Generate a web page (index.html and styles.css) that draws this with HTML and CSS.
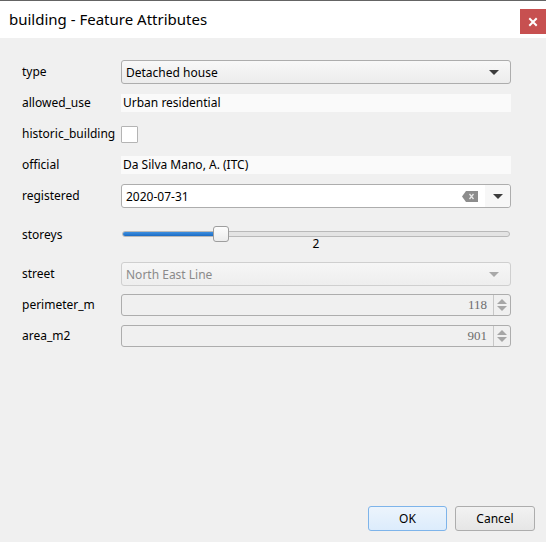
FILE: index.html
```html
<!DOCTYPE html>
<html>
<head>
<meta charset="utf-8">
<link rel="stylesheet" href="styles.css">
</head>
<body>
<div class="window">
  <div class="topline"></div>
  <div class="titlebar">
    <span class="title">building - Feature Attributes</span>
    <div class="close">
      <svg width="10" height="10" viewBox="0 0 10 10"><path d="M2 2 L8 8 M8 2 L2 8" stroke="#fff" stroke-width="2" stroke-linecap="square"/></svg>
    </div>
  </div>
  <div class="content">
    <div class="form">
      <div class="label">type</div>
      <div class="combo"><span>Detached house</span><span class="arrow"></span></div>

      <div class="label">allowed_use</div>
      <div class="cell"><div class="line">Urban residential</div></div>

      <div class="label">historic_building</div>
      <div class="cell"><div class="check"></div></div>

      <div class="label">official</div>
      <div class="cell"><div class="line">Da Silva Mano, A. (ITC)</div></div>

      <div class="label">registered</div>
      <div class="date">
        <span class="date-text">2020-07-31</span>
        <svg class="clear" width="16" height="11" viewBox="0 0 16 11"><path d="M4 0 H16 V11 H4 L0 5.5 Z" fill="#8c8c8c"/><path d="M7.5 3 L11.5 8 M11.5 3 L7.5 8" stroke="#e8e8e8" stroke-width="1.3"/></svg>
        <span class="date-btn"><span class="arrow"></span></span>
      </div>

      <div class="label">storeys</div>
      <div class="slider">
        <div class="track"><div class="fill" style="width:24%"></div></div>
        <div class="handle" style="left:24%"></div>
        <div class="value">2</div>
      </div>

      <div class="label">street</div>
      <div class="combo disabled"><span>North East Line</span><span class="arrow light"></span></div>

      <div class="label">perimeter_m</div>
      <div class="spin"><span class="num">118</span><span class="spin-btns"><span class="up"></span><span class="down"></span></span></div>

      <div class="label">area_m2</div>
      <div class="spin"><span class="num">901</span><span class="spin-btns"><span class="up"></span><span class="down"></span></span></div>
    </div>
  </div>
  <div class="footer">
    <button class="btn btn-default">OK</button>
    <button class="btn">Cancel</button>
  </div>
</div>
</body>
</html>
```
FILE: styles.css
```css
* { box-sizing: border-box; }
html, body { margin: 0; padding: 0; }
body {
  width: 546px;
  height: 542px;
  overflow: hidden;
  font-family: "Noto Sans", "Liberation Sans", sans-serif;
  font-size: 12px;
  color: #000;
  background: #f0f0f0;
}
.window {
  height: 542px;
  display: flex;
  flex-direction: column;
}
.topline {
  height: 1px;
  background: #646464;
}
.titlebar {
  height: 37px;
  background: #fff;
  display: flex;
  align-items: flex-start;
  justify-content: space-between;
}
.title {
  font-size: 15px;
  padding-left: 9px;
  padding-top: 8px;
  line-height: 20px;
}
.close {
  width: 26px;
  height: 25px;
  margin-top: 8px;
  background: #c75050;
  display: flex;
  align-items: center;
  justify-content: center;
}
.content {
  flex: 1;
  padding: 22px 35px 0 22px;
}
.form {
  display: grid;
  grid-template-columns: 99px 390px;
  grid-template-rows: 24px 24px 24px 24px 24px 40px 24px 24px 24px;
  row-gap: 7px;
  align-items: center;
}
.label {
  line-height: 16px;
  white-space: nowrap;
}
.cell {
  height: 24px;
  display: flex;
  align-items: center;
}
.line {
  width: 100%;
  height: 18px;
  background: #fafafa;
  padding-left: 2px;
  line-height: 18px;
}
.check {
  width: 17px;
  height: 17px;
  background: #fff;
  border: 1px solid #b4b4b4;
  border-radius: 1px;
}
.combo {
  height: 24px;
  border: 1px solid #adadad;
  border-radius: 3px;
  background: linear-gradient(#f8f8f8, #ececec);
  display: flex;
  align-items: center;
  justify-content: space-between;
  padding: 0 11px 0 4px;
}
.combo.disabled {
  border-color: #cfcfcf;
  background: linear-gradient(#f6f6f6, #eeeeee);
  color: #8a8a8a;
}
.arrow {
  width: 0;
  height: 0;
  border-left: 5px solid transparent;
  border-right: 5px solid transparent;
  border-top: 5px solid #3c3c3c;
}
.arrow.light { border-top-color: #a8a8a8; }
.date {
  height: 24px;
  border: 1px solid #adadad;
  border-radius: 3px;
  background: #fff;
  display: flex;
  align-items: center;
  padding-left: 4px;
}
.date-text { flex: 1; }
.clear { margin-right: 7px; }
.date-btn {
  width: 25px;
  height: 22px;
  background: #f7f7f7;
  display: flex;
  align-items: center;
  justify-content: center;
  border-radius: 0 3px 3px 0;
}
.slider {
  position: relative;
  height: 40px;
}
.track {
  position: absolute;
  left: 1px;
  right: 1px;
  top: 16px;
  height: 6px;
  border: 1px solid #b9b9b9;
  border-radius: 3px;
  background: #e4e4e4;
  overflow: hidden;
}
.fill {
  height: 100%;
  background: linear-gradient(#3d8fe0, #1c6cc4);
}
.handle {
  position: absolute;
  top: 11px;
  width: 16px;
  height: 16px;
  margin-left: -2px;
  border: 1px solid #9e9e9e;
  border-radius: 3px;
  background: linear-gradient(#fdfdfd, #ececec);
}
.value {
  position: absolute;
  left: 0;
  right: 0;
  top: 21px;
  text-align: center;
  line-height: 16px;
}
.spin {
  height: 22px;
  border: 1px solid #adadad;
  border-radius: 3px;
  background: #f0f0f0;
  display: flex;
  align-items: center;
  justify-content: flex-end;
}
.num {
  font-family: "Liberation Serif", serif;
  font-size: 13px;
  color: #6d6d6d;
  padding-right: 6px;
}
.spin-btns {
  width: 17px;
  height: 20px;
  border-left: 1px solid #c8c8c8;
  display: flex;
  flex-direction: column;
  align-items: center;
  justify-content: center;
  gap: 2px;
}
.up, .down {
  width: 0;
  height: 0;
  border-left: 5px solid transparent;
  border-right: 5px solid transparent;
}
.up { border-bottom: 5px solid #a6a6a6; }
.down { border-top: 5px solid #a6a6a6; }
.footer {
  display: flex;
  justify-content: flex-end;
  gap: 8px;
  padding: 0 11px 11px 0;
}
.btn {
  width: 80px;
  height: 25px;
  font-family: "Noto Sans", "Liberation Sans", sans-serif;
  font-size: 12px;
  color: #000;
  border: 1px solid #adadad;
  border-radius: 3px;
  background: linear-gradient(#f2f2f2, #e6e6e6);
  padding: 0;
}
.btn-default {
  width: 79px;
  border-color: #7eb4ea;
  background: linear-gradient(#ecf4fc, #dcecfc);
}
```
